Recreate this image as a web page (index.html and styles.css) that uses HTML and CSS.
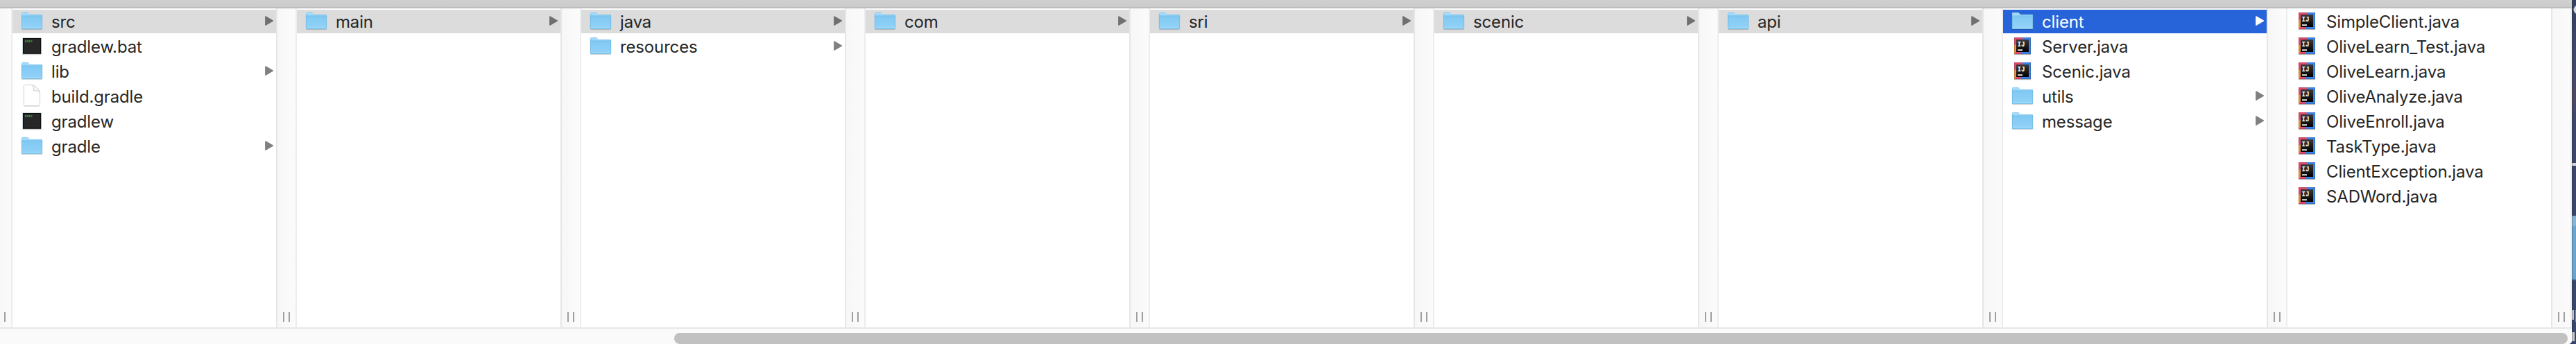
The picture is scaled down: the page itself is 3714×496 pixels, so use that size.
FILE: index.html
```html
<!DOCTYPE html>
<html lang="en">
<head>
<meta charset="utf-8">
<title>Finder</title>
<link rel="stylesheet" href="styles.css">
</head>
<body>
<svg class="defs" aria-hidden="true">
  <defs>
    <linearGradient id="front" x1="0" y1="0" x2="0" y2="1"><stop offset="0" stop-color="#7fc8f3"/><stop offset="1" stop-color="#93d3f8"/></linearGradient>
    <linearGradient id="dark" x1="0" y1="0" x2="0" y2="1"><stop offset="0" stop-color="#3a3a3a"/><stop offset="1" stop-color="#000"/></linearGradient>
    <symbol id="folder" viewBox="0 0 32 32">
      <path d="M1.5 28.3h29v.8h-29z" fill="#000" opacity=".22"/>
      <path d="M1 5.2Q1 4 2.200 4H9.500Q10.500 4 11.200 4.800L12.800 7H30Q31 7 31 8V27.200Q31 28 30.200 28H1.800Q1 28 1 27.200z" fill="#a3d9fa"/>
      <path d="M1 8.500H31V27.200Q31 28 30.200 28H1.800Q1 28 1 27.200z" fill="url(#front)"/>
      <path d="M2 4.300h8M12.500 7.200h18M1 8.900h30" stroke="#6bb8e2" stroke-width=".5" fill="none"/>
      <path d="M1.500 25.300h29" stroke="#a6dbf9" stroke-width=".7"/>
      <path d="M1.300 6V27.600H30.700V8" stroke="#64aed8" stroke-width=".6" fill="none"/>
    </symbol>
    <symbol id="exec" viewBox="0 0 32 32">
      <rect x="2" y="5" width="28" height="24.300" rx="1" fill="#000" opacity=".2"/>
      <rect x="2.200" y="4.300" width="27.600" height="24" rx=".5" fill="#c9dde2"/>
      <rect x="3" y="5" width="26.200" height="22.800" fill="#0c0c0c"/>
      <rect x="4.200" y="6" width="24" height="20.500" fill="#272727"/>
      <text x="5.800" y="11.300" class="exec-text" textLength="11" lengthAdjust="spacingAndGlyphs">exec</text>
    </symbol>
    <symbol id="doc" viewBox="0 0 32 32">
      <path d="M5 31h22" stroke="#999" stroke-width=".8" opacity=".6"/>
      <path d="M4.400 1.500Q4.400.5 5.400.5H16.500Q20 1.300 23.500 5.200Q27.600 9.500 27.600 12V29.500Q27.600 30.500 26.600 30.500H5.400Q4.400 30.500 4.400 29.500z" fill="#fff" stroke="#c4c4c4" stroke-width=".8"/>
      <path d="M17 .8Q18.700 3 18.500 8.600Q24.500 8.300 27.300 11Q25 6.500 22 3.800Q19.500 1.500 17 .8z" fill="#f7f7f7" stroke="#c0c0c0" stroke-width=".7"/>
    </symbol>
    <symbol id="java" viewBox="0 0 32 32">
      <rect x="4" y="5" width="24" height="24.200" fill="#000" opacity=".3"/>
      <rect x="4" y="4" width="24" height="24" fill="#3b83ea"/>
      <path d="M4 4h11l4 7-6 17H4z" fill="#e5476c"/>
      <path d="M4 15l4-1v9l-3 5H4z" fill="#ee9137"/>
      <rect x="4.400" y="4.400" width="23.200" height="23.200" fill="none" stroke="#222" stroke-opacity=".25" stroke-width=".8"/>
      <rect x="7" y="7" width="18" height="18" fill="url(#dark)"/>
      <text x="8.500" y="16.700" class="ij-text" textLength="11" lengthAdjust="spacingAndGlyphs">IJ</text>
      <rect x="9" y="21.300" width="7" height="1.700" fill="#fff"/>
    </symbol>
    <symbol id="arrow" viewBox="0 0 12 14"><path d="M.9 .9L11.200 7 .9 13.100z" fill="currentColor" stroke="currentColor" stroke-width="1.500" stroke-linejoin="round"/></symbol>
  </defs>
</svg>
<div class="screen">
  <main class="window">
    <header class="toolbar"></header>
    <section class="browser">
      <div class="gutter first"><i></i></div>
      <ul class="column">
        <li class="row open"><svg class="icon"><use href="#folder"/></svg><span class="name">src</span><svg class="arrow"><use href="#arrow"/></svg></li>
        <li class="row"><svg class="icon"><use href="#exec"/></svg><span class="name">gradlew.bat</span></li>
        <li class="row"><svg class="icon"><use href="#folder"/></svg><span class="name">lib</span><svg class="arrow"><use href="#arrow"/></svg></li>
        <li class="row"><svg class="icon"><use href="#doc"/></svg><span class="name">build.gradle</span></li>
        <li class="row"><svg class="icon"><use href="#exec"/></svg><span class="name">gradlew</span></li>
        <li class="row"><svg class="icon"><use href="#folder"/></svg><span class="name">gradle</span><svg class="arrow"><use href="#arrow"/></svg></li>
      </ul>
      <div class="gutter"><i></i><i></i></div>
      <ul class="column">
        <li class="row open"><svg class="icon"><use href="#folder"/></svg><span class="name">main</span><svg class="arrow"><use href="#arrow"/></svg></li>
      </ul>
      <div class="gutter"><i></i><i></i></div>
      <ul class="column">
        <li class="row open"><svg class="icon"><use href="#folder"/></svg><span class="name">java</span><svg class="arrow"><use href="#arrow"/></svg></li>
        <li class="row"><svg class="icon"><use href="#folder"/></svg><span class="name">resources</span><svg class="arrow"><use href="#arrow"/></svg></li>
      </ul>
      <div class="gutter"><i></i><i></i></div>
      <ul class="column">
        <li class="row open"><svg class="icon"><use href="#folder"/></svg><span class="name">com</span><svg class="arrow"><use href="#arrow"/></svg></li>
      </ul>
      <div class="gutter"><i></i><i></i></div>
      <ul class="column">
        <li class="row open"><svg class="icon"><use href="#folder"/></svg><span class="name">sri</span><svg class="arrow"><use href="#arrow"/></svg></li>
      </ul>
      <div class="gutter"><i></i><i></i></div>
      <ul class="column">
        <li class="row open"><svg class="icon"><use href="#folder"/></svg><span class="name">scenic</span><svg class="arrow"><use href="#arrow"/></svg></li>
      </ul>
      <div class="gutter"><i></i><i></i></div>
      <ul class="column">
        <li class="row open"><svg class="icon"><use href="#folder"/></svg><span class="name">api</span><svg class="arrow"><use href="#arrow"/></svg></li>
      </ul>
      <div class="gutter"><i></i><i></i></div>
      <ul class="column">
        <li class="row selected"><svg class="icon"><use href="#folder"/></svg><span class="name">client</span><svg class="arrow"><use href="#arrow"/></svg></li>
        <li class="row"><svg class="icon"><use href="#java"/></svg><span class="name">Server.java</span></li>
        <li class="row"><svg class="icon"><use href="#java"/></svg><span class="name">Scenic.java</span></li>
        <li class="row"><svg class="icon"><use href="#folder"/></svg><span class="name">utils</span><svg class="arrow"><use href="#arrow"/></svg></li>
        <li class="row"><svg class="icon"><use href="#folder"/></svg><span class="name">message</span><svg class="arrow"><use href="#arrow"/></svg></li>
      </ul>
      <div class="gutter"><i></i><i></i></div>
      <ul class="column">
        <li class="row"><svg class="icon"><use href="#java"/></svg><span class="name">SimpleClient.java</span></li>
        <li class="row"><svg class="icon"><use href="#java"/></svg><span class="name">OliveLearn_Test.java</span></li>
        <li class="row"><svg class="icon"><use href="#java"/></svg><span class="name">OliveLearn.java</span></li>
        <li class="row"><svg class="icon"><use href="#java"/></svg><span class="name">OliveAnalyze.java</span></li>
        <li class="row"><svg class="icon"><use href="#java"/></svg><span class="name">OliveEnroll.java</span></li>
        <li class="row"><svg class="icon"><use href="#java"/></svg><span class="name">TaskType.java</span></li>
        <li class="row"><svg class="icon"><use href="#java"/></svg><span class="name">ClientException.java</span></li>
        <li class="row"><svg class="icon"><use href="#java"/></svg><span class="name">SADWord.java</span></li>
      </ul>
      <div class="gutter"><i></i><i></i></div>
    </section>
    <footer class="scrollbar"><div class="thumb"></div></footer>
  </main>
  <svg class="desktop" viewBox="0 0 6 496">
    <defs><linearGradient id="sky" x1="0" y1="0" x2="0" y2="1"><stop offset="0" stop-color="#33405f"/><stop offset=".15" stop-color="#3e4768"/><stop offset=".28" stop-color="#4d4864"/><stop offset=".36" stop-color="#3b4668"/><stop offset="1" stop-color="#374669"/></linearGradient></defs>
    <rect width="6" height="496" fill="url(#sky)"/>
    <circle cx="9" cy="14" r="6.500" fill="#d9d9d9"/>
    <rect y="235" width="6" height="4" fill="#d4d5d8"/>
    <rect y="311" width="6" height="93" fill="#69a6cd"/>
    <rect y="312" width="6" height="14" fill="#83b5d3"/>
    <rect y="403" width="6" height="1.500" fill="#35607f"/>
    <rect y="447" width="3" height="14" fill="#c9c9cb"/>
    <rect x="5" y="447" width="1" height="17" fill="#8b90a2"/>
    <rect y="479" width="4" height="13" fill="#c9c9cb"/>
    <rect width=".7" height="496" fill="#1f2943" opacity=".5"/>
  </svg>
</div>
</body>
</html>
```
FILE: styles.css
```css
* { box-sizing: border-box; }
body { margin: 0; overflow: hidden; background: #374669; }
.defs { position: absolute; width: 0; height: 0; }
.screen { display: flex; width: 3714px; height: 496px; }
.window {
  display: flex;
  flex-direction: column;
  width: 3708px;
  background: #fafafa;
  border-bottom-right-radius: 5px;
  overflow: hidden;
}
.desktop { width: 6px; height: 496px; display: block; }
.toolbar {
  flex: 0 0 12px;
  background: linear-gradient(#d0d0d0, #cacaca);
  border-bottom: 1px solid #a4a4a4;
}
.browser { display: flex; flex: 0 0 462px; border-bottom: 2px solid #e7e7e7; }
.gutter {
  flex: 0 0 30px;
  display: flex;
  align-items: flex-end;
  gap: 6px;
  padding: 0 0 8px 8px;
  background: linear-gradient(90deg, #f7f7f7, #fbfbfb);
  border-left: 2px solid #e6e6e6;
  border-right: 2px solid #ededed;
}
.gutter.first { flex-basis: 18px; border-left: 0; padding-left: 6px; }
.gutter i { width: 2px; height: 14px; background: #a0a0a0; }
.column {
  flex: 0 0 380px;
  display: flex;
  flex-direction: column;
  gap: 2px;
  margin: 0;
  padding: 2px 0 0;
  list-style: none;
  background: #fff;
}
.row {
  display: flex;
  align-items: flex-start;
  height: 34px;
  padding: 0 4px 0 12px;
  color: #262626;
  font: 24px/35px Inter, "Liberation Sans", sans-serif;
  letter-spacing: -0.15px;
}
.row.open { background: #dcdcdc; }
.row.selected { background: #2864d9; color: #fff; }
.icon { flex: 0 0 32px; height: 32px; margin-right: 12px; }
.name { flex: 1; white-space: nowrap; }
.arrow { width: 12px; height: 14px; margin-top: 9px; color: #808080; }
.open .arrow { color: #707070; }
.selected .arrow { color: #fff; }
.exec-text { font: bold 5.500px "Liberation Mono", monospace; letter-spacing: 0; fill: #55a850; }
.ij-text { font: bold 11.500px "Liberation Mono", monospace; letter-spacing: 0; fill: #fff; }
.scrollbar { flex: 0 0 22px; padding: 6px 6px 0 972px; background: #fafafa; }
.thumb { height: 16px; border-radius: 8px; background: #c1c1c1; }
```
